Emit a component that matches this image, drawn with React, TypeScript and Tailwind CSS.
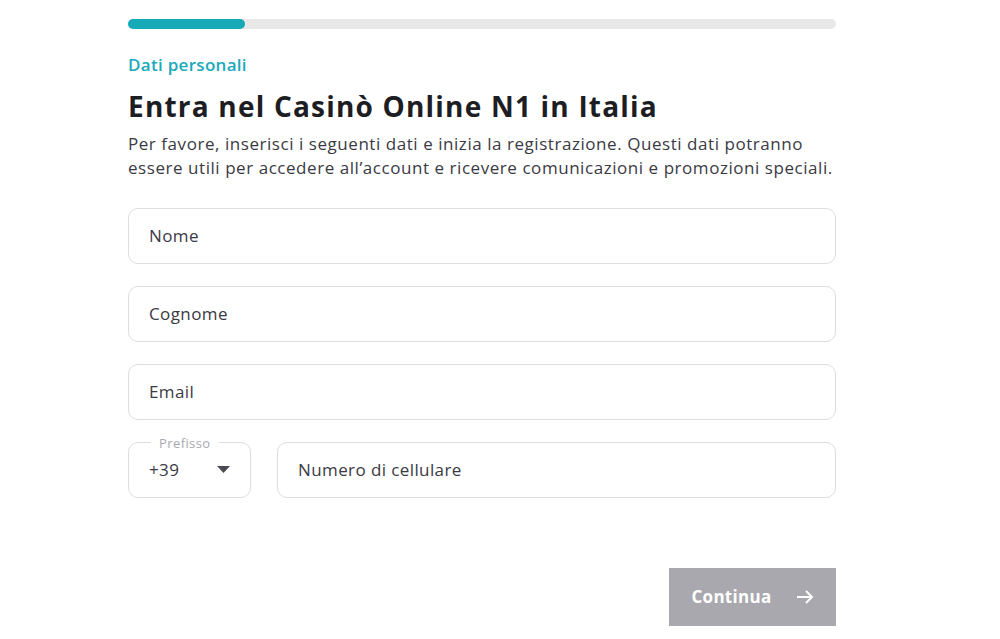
import React from "react";

const font = { fontFamily: "'Open Sans', 'Noto Sans', sans-serif" };

function Field({ label }: { label: string }) {
  return (
    <div className="flex h-[56px] items-center rounded-[10px] border border-[#dedede] bg-white px-5">
      <span className="text-[17px] tracking-[0.4px] text-[#3a3a44]">{label}</span>
    </div>
  );
}

export default function App() {
  return (
    <div className="min-h-[639px] w-full bg-white" style={font}>
      <div className="ml-[128px] w-[708px] pt-[19px]">
        <div className="h-[10px] w-full rounded-full bg-[#e8e8e8]">
          <div className="h-full w-[117px] rounded-full bg-[#16a9b8]" />
        </div>

        <p className="mt-[23px] text-[17px] font-semibold tracking-[0.3px] text-[#1aaab9]">Dati personali</p>
        <h1 className="mt-[10px] text-[28px] font-bold leading-[36px] tracking-[1.2px] text-[#1d1d24]">
          Entra nel Casinò Online N1 in Italia
        </h1>
        <p className="mt-[8px] text-[17px] leading-[24px] tracking-[0.55px] text-[#3a3a44]">
          Per favore, inserisci i seguenti dati e inizia la registrazione. Questi dati potranno
          <br />
          essere utili per accedere all’account e ricevere comunicazioni e promozioni speciali.
        </p>

        <div className="mt-[28px] flex flex-col gap-[22px]">
          <Field label="Nome" />
          <Field label="Cognome" />
          <Field label="Email" />
          <div className="flex gap-[26px]">
            <div className="relative flex h-[56px] w-[123px] items-center justify-between rounded-[10px] border border-[#dedede] bg-white pl-5 pr-5">
              <span className="absolute -top-[9px] left-[22px] bg-white px-2 text-[13px] tracking-[0.4px] text-[#a8a8b0]">
                Prefisso
              </span>
              <span className="text-[17px] tracking-[0.4px] text-[#3a3a44]">+39</span>
              <svg width="13" height="7" viewBox="0 0 13 7">
                <path d="M0 0h13L6.5 7z" fill="#4a4a52" />
              </svg>
            </div>
            <div className="flex-1">
              <Field label="Numero di cellulare" />
            </div>
          </div>
        </div>

        <div className="mt-[70px] flex justify-end">
          <button className="flex h-[58px] w-[167px] items-center justify-center gap-[24px] bg-[#a9a8ae] text-[17px] font-bold tracking-[0.3px] text-white">
            Continua
            <svg width="18" height="14" viewBox="0 0 18 14" fill="none" stroke="white" strokeWidth="2">
              <path d="M1 7h15M10 1l6 6-6 6" />
            </svg>
          </button>
        </div>
      </div>
    </div>
  );
}
